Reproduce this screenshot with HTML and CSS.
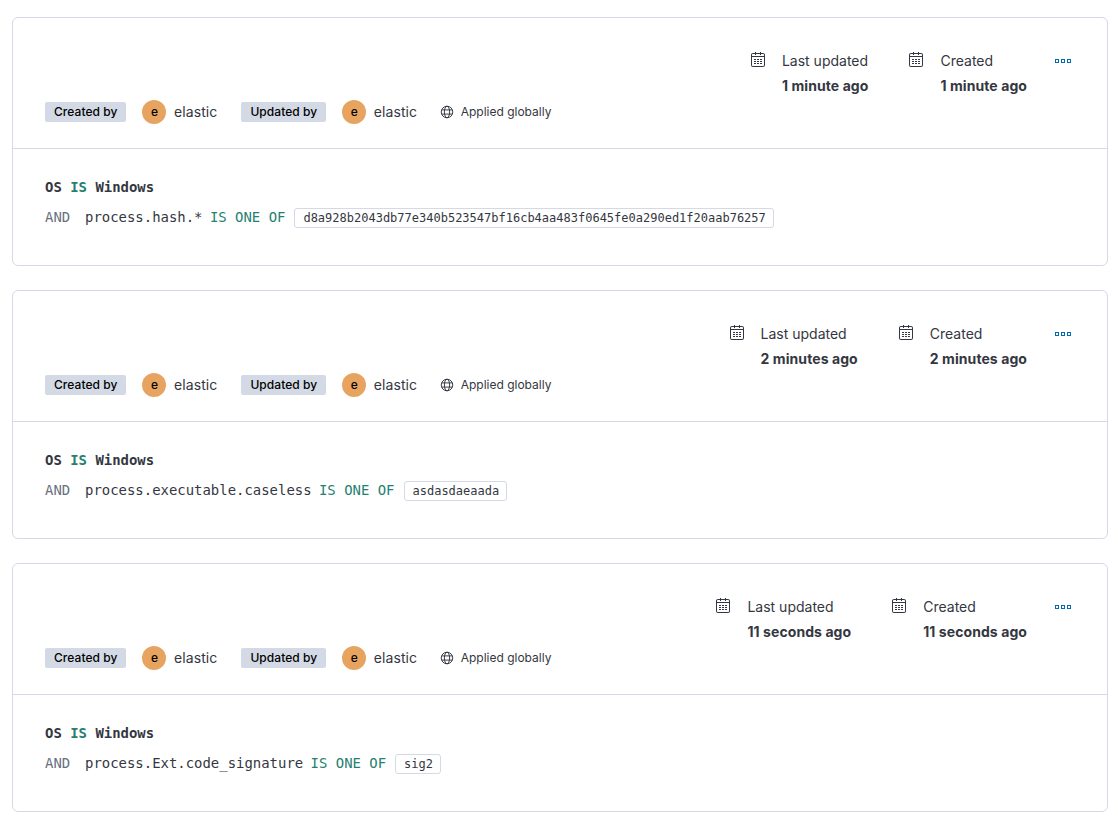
FILE: index.html
```html
<!DOCTYPE html>
<html lang="en">
<head>
<meta charset="utf-8">
<title>Exceptions</title>
<link rel="stylesheet" href="styles.css">
</head>
<body>
<svg class="defs" width="0" height="0" aria-hidden="true">
  <symbol id="cal" viewBox="0 0 16 16">
    <path fill="currentColor" d="M14 4v-.994C14 2.45 13.55 2 12.994 2H11v1h-1V2H6v1H5V2H3.006C2.45 2 2 2.45 2 3.006v9.988C2 13.55 2.45 14 3.006 14h9.988C13.55 14 14 13.55 14 12.994V5H2V4h12zm-3-3h1.994C14.102 1 15 1.897 15 3.006v9.988A2.005 2.005 0 0 1 12.994 15H3.006A2.005 2.005 0 0 1 1 12.994V3.006C1 1.898 1.897 1 3.006 1H5V0h1v1h4V0h1v1zM4 7h2v1H4V7zm3 0h2v1H7V7zm3 0h2v1h-2V7zM4 9h2v1H4V9zm3 0h2v1H7V9zm3 0h2v1h-2V9zm-6 2h2v1H4v-1zm3 0h2v1H7v-1zm3 0h2v1h-2v-1z"/>
  </symbol>
  <symbol id="globe" viewBox="0 0 16 16">
    <g fill="none" stroke="currentColor" stroke-width="1.1">
      <circle cx="8" cy="8" r="6.6"/>
      <ellipse cx="8" cy="8" rx="3" ry="6.6"/>
      <path d="M2 5.6h12M2 10.4h12"/>
    </g>
  </symbol>
  <symbol id="dots" viewBox="0 0 16 16">
    <path fill="currentColor" d="M0 5h4v4H0V5zm1 1v2h2V6H1zm5-1h4v4H6V5zm1 1v2h2V6H7zm5-1h4v4h-4V5zm1 1v2h2V6h-2z"/>
  </symbol>
</svg>

<main class="list">
  <article class="card">
    <header class="card-head">
      <div class="meta-row">
        <div class="dates">
          <div class="date">
            <svg class="ico-cal"><use href="#cal"/></svg>
            <dl class="date-text"><dt>Last updated</dt><dd>1 minute ago</dd></dl>
          </div>
          <div class="date">
            <svg class="ico-cal"><use href="#cal"/></svg>
            <dl class="date-text"><dt>Created</dt><dd>1 minute ago</dd></dl>
          </div>
        </div>
        <button class="more" type="button" aria-label="Actions"><svg class="ico-dots"><use href="#dots"/></svg></button>
      </div>
      <div class="by-row">
        <span class="badge">Created by</span>
        <span class="avatar">e</span>
        <span class="user">elastic</span>
        <span class="badge badge-next">Updated by</span>
        <span class="avatar">e</span>
        <span class="user">elastic</span>
        <svg class="ico-globe"><use href="#globe"/></svg>
        <span class="scope">Applied globally</span>
      </div>
    </header>
    <section class="card-body">
      <div class="cond"><b>OS</b> <b class="op">IS</b> <b>Windows</b></div>
      <div class="cond"><span class="and">AND</span><span class="field">process.hash.*</span> <span class="op">IS ONE OF</span><span class="val">d8a928b2043db77e340b523547bf16cb4aa483f0645fe0a290ed1f20aab76257</span></div>
    </section>
  </article>

  <article class="card">
    <header class="card-head">
      <div class="meta-row">
        <div class="dates">
          <div class="date">
            <svg class="ico-cal"><use href="#cal"/></svg>
            <dl class="date-text"><dt>Last updated</dt><dd>2 minutes ago</dd></dl>
          </div>
          <div class="date">
            <svg class="ico-cal"><use href="#cal"/></svg>
            <dl class="date-text"><dt>Created</dt><dd>2 minutes ago</dd></dl>
          </div>
        </div>
        <button class="more" type="button" aria-label="Actions"><svg class="ico-dots"><use href="#dots"/></svg></button>
      </div>
      <div class="by-row">
        <span class="badge">Created by</span>
        <span class="avatar">e</span>
        <span class="user">elastic</span>
        <span class="badge badge-next">Updated by</span>
        <span class="avatar">e</span>
        <span class="user">elastic</span>
        <svg class="ico-globe"><use href="#globe"/></svg>
        <span class="scope">Applied globally</span>
      </div>
    </header>
    <section class="card-body">
      <div class="cond"><b>OS</b> <b class="op">IS</b> <b>Windows</b></div>
      <div class="cond"><span class="and">AND</span><span class="field">process.executable.caseless</span> <span class="op">IS ONE OF</span><span class="val">asdasdaeaada</span></div>
    </section>
  </article>

  <article class="card">
    <header class="card-head">
      <div class="meta-row">
        <div class="dates">
          <div class="date">
            <svg class="ico-cal"><use href="#cal"/></svg>
            <dl class="date-text"><dt>Last updated</dt><dd>11 seconds ago</dd></dl>
          </div>
          <div class="date">
            <svg class="ico-cal"><use href="#cal"/></svg>
            <dl class="date-text"><dt>Created</dt><dd>11 seconds ago</dd></dl>
          </div>
        </div>
        <button class="more" type="button" aria-label="Actions"><svg class="ico-dots"><use href="#dots"/></svg></button>
      </div>
      <div class="by-row">
        <span class="badge">Created by</span>
        <span class="avatar">e</span>
        <span class="user">elastic</span>
        <span class="badge badge-next">Updated by</span>
        <span class="avatar">e</span>
        <span class="user">elastic</span>
        <svg class="ico-globe"><use href="#globe"/></svg>
        <span class="scope">Applied globally</span>
      </div>
    </header>
    <section class="card-body">
      <div class="cond"><b>OS</b> <b class="op">IS</b> <b>Windows</b></div>
      <div class="cond"><span class="and">AND</span><span class="field">process.Ext.code_signature</span> <span class="op">IS ONE OF</span><span class="val">sig2</span></div>
    </section>
  </article>
</main>
</body>
</html>
```
FILE: styles.css
```css
* { box-sizing: border-box; }
html, body { margin: 0; background: #fff; }
body {
  font-family: Inter, "Liberation Sans", sans-serif;
  font-size: 14px;
  color: #343741;
  overflow: hidden;
}
.defs { position: absolute; }
.list {
  display: flex;
  flex-direction: column;
  gap: 24px;
  padding: 17px 10px 0 12px;
}
.card {
  height: 249px;
  border: 1px solid #d3dae6;
  border-radius: 6px;
  background: #fff;
}
.card-head {
  height: 131px;
  padding: 30px 36px 0 32px;
  border-bottom: 1px solid #d3dae6;
}
.meta-row {
  display: flex;
  justify-content: flex-end;
  align-items: flex-start;
  height: 48px;
}
.dates { display: flex; gap: 40px; }
.date { display: flex; gap: 16px; }
.ico-cal { width: 16px; height: 16px; color: #343741; flex: none; margin-top: 4px; }
.date-text { margin: 0; line-height: 25px; }
.date-text dt { font-weight: 400; color: #343741; }
.date-text dd { margin: 0; font-weight: 700; letter-spacing: 0.08px; }
.more {
  margin: 6px 0 0 28px;
  padding: 0;
  width: 16px;
  height: 16px;
  border: 0;
  background: none;
  color: #006bb4;
}
.ico-dots { display: block; width: 16px; height: 16px; }
.by-row {
  display: flex;
  align-items: center;
  height: 24px;
  margin-top: 4px;
}
.badge {
  height: 20px;
  line-height: 20px;
  padding: 0 9px;
  border-radius: 2px;
  background: #d3dae6;
  color: #000;
  font-size: 12px;
  font-weight: 500;
  letter-spacing: 0.05px;
}
.badge-next { margin-left: 24px; }
.avatar {
  width: 24px;
  height: 24px;
  margin-left: 16px;
  border-radius: 50%;
  background: #e7a461;
  color: #000;
  font-size: 12px;
  font-weight: 500;
  line-height: 24px;
  text-align: center;
}
.user { margin-left: 7.5px; padding-bottom: 1px; color: #343741; letter-spacing: 0.1px; }
.ico-globe { width: 14px; height: 14px; margin-left: 22.5px; color: #343741; flex: none; }
.scope { margin-left: 7px; padding-bottom: 1px; font-size: 12px; color: #343741; }
.card-body {
  padding: 23px 32px 0;
  font-family: "DejaVu Sans Mono", "Liberation Mono", monospace;
  font-size: 13.95px;
  line-height: 30px;
  color: #343741;
}
.cond { height: 30px; white-space: pre; }
.cond b { font-weight: 700; }
.cond .op { color: #267f72; }
.and { display: inline-block; width: 40px; color: #69707d; }
.field { margin-right: -1px; color: #343741; }
.val {
  display: inline-block;
  margin-left: 9px;
  height: 20px;
  line-height: 18px;
  padding: 0 7px 0 8px;
  border: 1px solid #d3dae6;
  border-radius: 3px;
  font-size: 12px;
  color: #343741;
}
```
